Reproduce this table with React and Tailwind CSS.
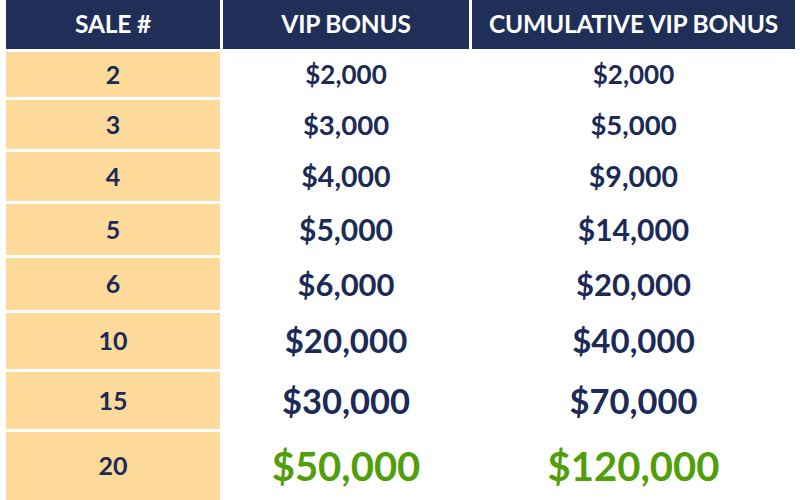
const ROWS = [
  { sale: "2", vip: "$2,000", total: "$2,000", h: "h-[45px]", size: "text-[26px]" },
  { sale: "3", vip: "$3,000", total: "$5,000", h: "h-[49px]", size: "text-[27.5px]" },
  { sale: "4", vip: "$4,000", total: "$9,000", h: "h-[49px]", size: "text-[28.5px]" },
  { sale: "5", vip: "$5,000", total: "$14,000", h: "h-[51px]", size: "text-[30px]" },
  { sale: "6", vip: "$6,000", total: "$20,000", h: "h-[52px]", size: "text-[31px]" },
  { sale: "10", vip: "$20,000", total: "$40,000", h: "h-[56px]", size: "text-[33px]" },
  { sale: "15", vip: "$30,000", total: "$70,000", h: "h-[57px]", size: "text-[34.5px]" },
  { sale: "20", vip: "$50,000", total: "$120,000", h: "h-[68px]", size: "text-[40px]", win: true },
];

export default function App() {
  return (
    <div
      className="w-[800px] h-[500px] overflow-hidden bg-white pl-[6px] pr-[5px]"
      style={{ fontFamily: "Lato, 'Open Sans', sans-serif" }}
    >
      <div className="grid grid-cols-[214px_246px_323px] gap-x-[3px] gap-y-[3px]">
        {["SALE #", "VIP BONUS", "CUMULATIVE VIP BONUS"].map((label) => (
          <div
            key={label}
            className="h-[49px] bg-[#1f2f58] flex items-center justify-center text-white font-bold text-[24.5px] tracking-[-0.2px]"
          >
            {label}
          </div>
        ))}

        {ROWS.map((row) => {
          const money = row.win ? "text-[#519e0b]" : "text-[#1b2a56]";
          return [
            <div
              key={row.sale + "a"}
              className={`${row.h} bg-[#fdda9a] flex items-center justify-center text-[#1b2a56] font-bold text-[25px]`}
            >
              {row.sale}
            </div>,
            <div
              key={row.sale + "b"}
              className={`${row.h} flex items-center justify-center font-bold ${row.size} ${money}`}
            >
              {row.vip}
            </div>,
            <div
              key={row.sale + "c"}
              className={`${row.h} flex items-center justify-center font-bold ${row.size} ${money}`}
            >
              {row.total}
            </div>,
          ];
        })}
      </div>
    </div>
  );
}
